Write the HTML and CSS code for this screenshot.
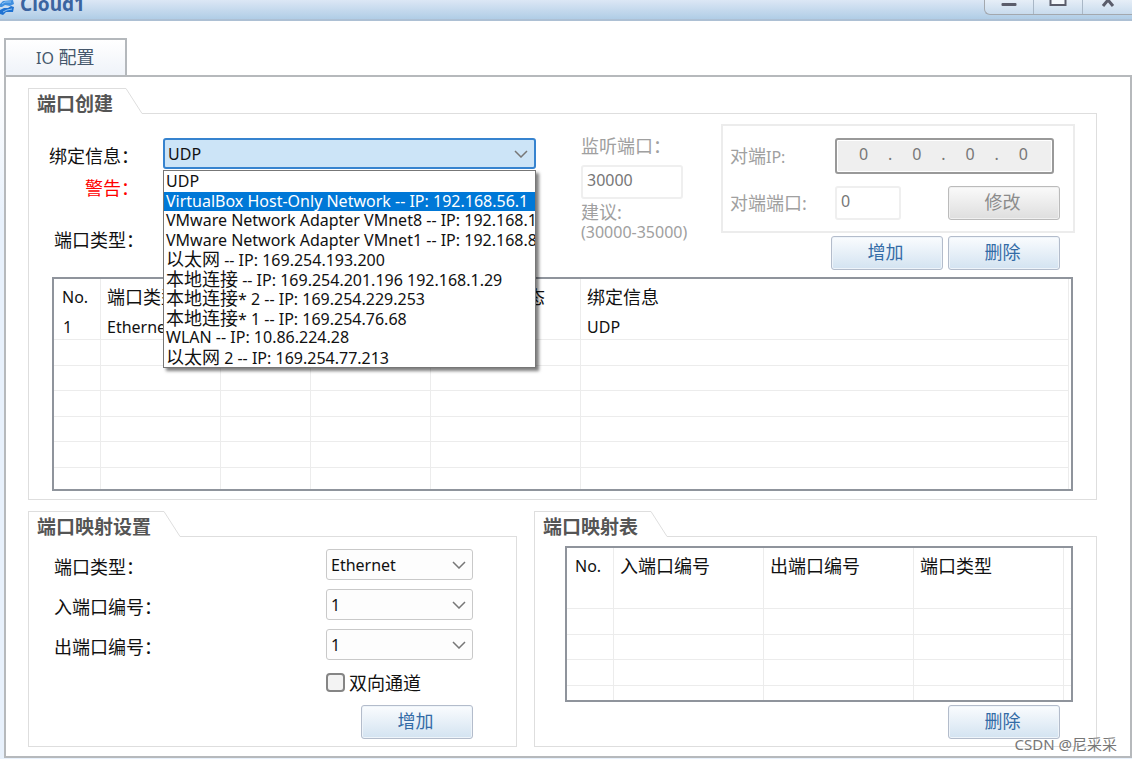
FILE: index.html
```html
<!DOCTYPE html>
<html lang="zh-CN">
<head>
    <meta charset="UTF-8">
    <meta name="viewport" content="width=device-width, initial-scale=1.0">
    <title>Cloud1</title>
    <link rel="stylesheet" href="styles.css">
</head>
<body>
    <header class="titlebar">
        <svg class="logo" width="15" height="16" viewBox="0 0 15 16">
            <path d="M0 4 L3 1 L13 0 L14 4 L10 6 L5 5 L2 7 L0 7 Z" fill="#3f8fe0"/>
            <path d="M0 10 L4 8 L8 8 L11 6 L14 7 L13 12 L6 12 L3 15 L0 14 Z" fill="#1f72d2"/>
            <path d="M2 4 L5 2 L11 2 M3 12 L7 10 L12 9" stroke="#8cc4f5" fill="none"/>
        </svg>
        <h1 class="window-title">Cloud1</h1>
        <div class="window-buttons">
            <button aria-label="最小化"><svg width="16" height="10" viewBox="0 0 16 10"><rect x="0.5" y="3" width="15" height="3" rx="1" fill="#5b5d6b"/></svg></button>
            <button aria-label="最大化"><svg width="18" height="10" viewBox="0 0 18 10"><path d="M1.5 0 V5 H16.5 V0" fill="#f4f8fc" stroke="#5b5d6b" stroke-width="2"/></svg></button>
            <button aria-label="关闭"><svg width="14" height="10" viewBox="0 0 14 10"><path d="M2 6 L7 0 L12 6" fill="none" stroke="#5b5d6b" stroke-width="3"/></svg></button>
        </div>
    </header>

    <main>
        <nav class="tabs">
            <button class="tab"><span class="latin">IO</span> 配置</button>
        </nav>

        <div class="panel">
            <!-- Create port -->
            <section class="group">
                <div class="group-head">
                    <h2>端口创建</h2>
                    <svg width="17" height="26" viewBox="0 0 17 26"><path d="M0 0.5 L16 25.5 H17" fill="none" stroke="#dedede"/></svg>
                    <span class="rule"></span>
                </div>
                <div class="group-body create">
                    <div class="create-form">
                        <div class="create-labels">
                            <label for="binding">绑定信息：</label>
                            <span class="warning">警告：</span>
                            <span class="type-label">端口类型：</span>
                        </div>

                        <div class="binding">
                            <select id="binding" class="select active">
                                <option>UDP</option>
                            </select>
                            <ul class="menu" role="listbox" aria-label="绑定信息">
                                <li role="option">UDP</li>
                                <li role="option" class="selected" aria-selected="true">VirtualBox Host-Only Network -- IP: 192.168.56.1</li>
                                <li role="option">VMware Network Adapter VMnet8 -- IP: 192.168.19</li>
                                <li role="option">VMware Network Adapter VMnet1 -- IP: 192.168.85</li>
                                <li role="option"><span class="zh">以太网</span> -- IP: 169.254.193.200</li>
                                <li role="option"><span class="zh">本地连接</span> -- IP: 169.254.201.196 192.168.1.29</li>
                                <li role="option"><span class="zh">本地连接</span>* 2 -- IP: 169.254.229.253</li>
                                <li role="option"><span class="zh">本地连接</span>* 1 -- IP: 169.254.76.68</li>
                                <li role="option">WLAN -- IP: 10.86.224.28</li>
                                <li role="option"><span class="zh">以太网</span> 2 -- IP: 169.254.77.213</li>
                            </ul>
                        </div>

                        <div class="listen">
                            <label for="listenPort">监听端口：</label>
                            <input id="listenPort" class="field" type="text" value="30000" disabled>
                            <span>建议:</span>
                            <span class="latin">(30000-35000)</span>
                        </div>

                        <div class="peer">
                            <div class="peer-box">
                                <div class="peer-row">
                                    <label for="ip1">对端<span class="latin">IP:</span></label>
                                    <div class="ip-field">
                                        <input id="ip1" type="text" value="0" disabled>
                                        <span>.</span>
                                        <input type="text" value="0" aria-label="对端IP 2" disabled>
                                        <span>.</span>
                                        <input type="text" value="0" aria-label="对端IP 3" disabled>
                                        <span>.</span>
                                        <input type="text" value="0" aria-label="对端IP 4" disabled>
                                    </div>
                                </div>
                                <div class="peer-row">
                                    <label for="peerPort">对端端口:</label>
                                    <input id="peerPort" class="field short" type="text" value="0" disabled>
                                    <button class="btn" disabled>修改</button>
                                </div>
                            </div>
                            <div class="actions">
                                <button class="btn">增加</button>
                                <button class="btn">删除</button>
                            </div>
                        </div>
                    </div>

                    <div class="table-box ports">
                        <table>
                            <colgroup>
                                <col class="w-no"><col class="w-120"><col class="w-90"><col class="w-120"><col class="w-150"><col>
                            </colgroup>
                            <thead>
                                <tr><th class="latin">No.</th><th>端口类型</th><th></th><th></th><th>端口开放状态</th><th>绑定信息</th></tr>
                            </thead>
                            <tbody>
                                <tr><td class="num">1</td><td>Ethernet</td><td></td><td></td><td></td><td>UDP</td></tr>
                                <tr><td></td><td></td><td></td><td></td><td></td><td></td></tr>
                                <tr><td></td><td></td><td></td><td></td><td></td><td></td></tr>
                                <tr><td></td><td></td><td></td><td></td><td></td><td></td></tr>
                                <tr><td></td><td></td><td></td><td></td><td></td><td></td></tr>
                                <tr><td></td><td></td><td></td><td></td><td></td><td></td></tr>
                                <tr><td></td><td></td><td></td><td></td><td></td><td></td></tr>
                            </tbody>
                        </table>
                    </div>
                </div>
            </section>

            <div class="bottom">
                <!-- Port mapping settings -->
                <section class="group">
                    <div class="group-head">
                        <h2>端口映射设置</h2>
                        <svg width="17" height="26" viewBox="0 0 17 26"><path d="M0 0.5 L16 25.5 H17" fill="none" stroke="#dedede"/></svg>
                        <span class="rule"></span>
                    </div>
                    <div class="group-body mapping">
                        <label for="portType">端口类型：</label>
                        <select id="portType" class="select"><option>Ethernet</option></select>
                        <label for="inPort">入端口编号：</label>
                        <select id="inPort" class="select"><option>1</option></select>
                        <label for="outPort">出端口编号：</label>
                        <select id="outPort" class="select"><option>1</option></select>
                        <label class="check"><input type="checkbox">双向通道</label>
                        <button class="btn">增加</button>
                    </div>
                </section>

                <!-- Port mapping table -->
                <section class="group">
                    <div class="group-head">
                        <h2>端口映射表</h2>
                        <svg width="17" height="26" viewBox="0 0 17 26"><path d="M0 0.5 L16 25.5 H17" fill="none" stroke="#dedede"/></svg>
                        <span class="rule"></span>
                    </div>
                    <div class="group-body map-table">
                        <div class="table-box maps">
                            <table>
                                <colgroup>
                                    <col class="w-no"><col class="w-150"><col class="w-150"><col class="w-150"><col>
                                </colgroup>
                                <thead>
                                    <tr><th class="latin">No.</th><th>入端口编号</th><th>出端口编号</th><th>端口类型</th><th></th></tr>
                                </thead>
                                <tbody>
                                    <tr><td></td><td></td><td></td><td></td><td></td></tr>
                                    <tr><td></td><td></td><td></td><td></td><td></td></tr>
                                    <tr><td></td><td></td><td></td><td></td><td></td></tr>
                                    <tr><td></td><td></td><td></td><td></td><td></td></tr>
                                    <tr><td></td><td></td><td></td><td></td><td></td></tr>
                                </tbody>
                            </table>
                        </div>
                        <button class="btn">删除</button>
                    </div>
                </section>
            </div>
        </div>
    </main>
    <div class="watermark">CSDN @尼采采</div>
</body>
</html>
```
FILE: styles.css
```css
* {
    box-sizing: border-box;
}
body {
    margin: 0;
    min-height: 100vh;
    position: relative;
    display: flex;
    flex-direction: column;
    font-family: "Noto Sans", "Noto Sans CJK SC", sans-serif;
    font-size: 18px;
    line-height: 24px;
    color: #111;
    background: #fff;
}
h1, h2, ul {
    margin: 0;
    padding: 0;
}
button, input, select {
    font-family: inherit;
    margin: 0;
}
.latin {
    font-size: 16px;
}
.zh {
    font-size: 18px;
}

/* Title bar */
.titlebar {
    display: flex;
    align-items: flex-start;
    height: 21px;
    overflow: hidden;
    background: linear-gradient(#dce7f5, #b0cde6);
    border-bottom: 2px solid #adc0d4;
}
.window-title {
    margin-left: 5px;
    margin-top: -8px;
    flex: 1;
    font-size: 19px;
    color: #3b64a0;
}
.window-buttons {
    display: flex;
    height: 15px;
    border: 1px solid #a3a8ae;
    border-top: none;
    border-right: none;
    border-bottom-left-radius: 6px;
    background: linear-gradient(#e6eef7, #c8dbed);
}
.window-buttons button {
    width: 49px;
    padding: 0;
    border: none;
    border-right: 1px solid #a9b7c6;
    background: none;
    display: flex;
    justify-content: center;
    align-items: flex-start;
}
.window-buttons button:last-child {
    border-right: none;
}

/* Tabs and main panel */
main {
    flex: 1;
    padding: 17px 0 2px 4px;
    background: linear-gradient(#fff 55px, #e8f1fc 200px);
}
.tabs {
    display: flex;
}
.tab {
    width: 123px;
    height: 37px;
    padding: 0 0 3px 30px;
    border: 2px solid #b4b8bc;
    border-bottom: none;
    background: linear-gradient(#fff, #eff3f9);
    font-size: 18px;
    color: #46586c;
    text-align: left;
}
.panel {
    border: 2px solid #b6b9bc;
    background: #fff;
    padding: 11px 33px 9px 22px;
    display: flex;
    flex-direction: column;
    gap: 11px;
}

/* Group boxes */
.group {
    display: flex;
    flex-direction: column;
}
.group-head {
    display: flex;
    height: 26px;
}
.group-head h2 {
    border-top: 1px solid #dedede;
    border-left: 1px solid #dedede;
    padding: 3px 13px 0 8px;
    font-size: 19px;
    color: #555;
}
.rule {
    flex: 1;
    border-bottom: 1px solid #dedede;
}
.group-body {
    flex: 1;
    border: 1px solid #dedede;
    border-top: none;
}

/* Controls */
.btn {
    width: 112px;
    height: 34px;
    padding: 0 3px 4px 0;
    border: 1px solid #b3bccb;
    border-radius: 3px;
    background: linear-gradient(#fafcfe, #d3e3f1);
    box-shadow: inset 0 0 0 1px #eef4fa;
    font-size: 18px;
    color: #336ba6;
}
.btn:disabled {
    border-color: #bbb;
    background: linear-gradient(#fafafa, #dedede);
    box-shadow: inset 0 0 0 1px #f0f0f0;
    color: #8b8b8b;
}
.field {
    width: 102px;
    height: 34px;
    padding: 0 4px 4px;
    border: 2px solid #efefef;
    border-radius: 3px;
    background: #fff;
    font-size: 16px;
    color: #777;
}
.field.short {
    width: 66px;
}
.select {
    width: 147px;
    height: 31px;
    padding: 0 4px;
    border: 1px solid #c9c9c9;
    border-radius: 3px;
    appearance: none;
    background: #fdfdfd url("data:image/svg+xml,%3Csvg xmlns='http://www.w3.org/2000/svg' width='14' height='8'%3E%3Cpath d='M1 1 L7 7 L13 1' fill='none' stroke='%23777' stroke-width='1.5'/%3E%3C/svg%3E") no-repeat right 6px center;
    font-size: 16px;
    color: #111;
}
.select.active {
    width: 100%;
    border: 2px solid #3683cf;
    padding: 0 3px;
    background-color: #cce4f7;
}

/* Create port form */
.create {
    padding: 10px 21px 8px;
}
.create-form {
    display: grid;
    grid-template-columns: 113px minmax(200px, 1fr) 185px 354px;
}
.create-labels {
    display: flex;
    flex-direction: column;
    align-items: flex-end;
    padding: 16px 24px 0 0;
    line-height: 32px;
    white-space: nowrap;
}
.warning {
    color: #f00;
}
.type-label {
    margin-top: 20px;
    margin-right: -5px;
}
.binding {
    position: relative;
    padding-top: 14px;
}
.menu {
    position: absolute;
    top: 46px;
    left: 0;
    right: 0;
    padding: 1px 0 0;
    list-style: none;
    overflow: hidden;
    border: 1px solid #777;
    background: #fff;
    box-shadow: 3px 3px 3px rgba(0, 0, 0, 0.5);
    font-size: 16px;
}
.menu li {
    height: 20px;
    padding-left: 2px;
    line-height: 19px;
    white-space: nowrap;
}
.menu li:nth-child(even) {
    height: 19px;
}
.menu .selected {
    background: #0078d7;
    color: #fff;
}
.listen {
    display: flex;
    flex-direction: column;
    align-items: flex-start;
    padding: 10px 0 0 45px;
    color: #a0a0a0;
}
.listen .field {
    margin: 7px 0 3px;
}
.listen span {
    line-height: 20px;
}
.peer-box {
    display: flex;
    flex-direction: column;
    gap: 12px;
    border: 2px solid #ececec;
    padding: 12px 13px 11px 7px;
}
.peer-row {
    display: flex;
    align-items: center;
    color: #a0a0a0;
}
.peer-row label {
    width: 105px;
}
.peer-row .btn {
    margin-left: auto;
}
.ip-field {
    display: flex;
    align-items: center;
    width: 219px;
    height: 36px;
    padding: 0 5px 4px 3px;
    border: 2px solid #999;
    border-radius: 3px;
    background: #efefef;
    box-shadow: inset 0 0 0 1px #fff;
    font-size: 16px;
    color: #777;
}
.ip-field input {
    flex: 1;
    min-width: 0;
    padding: 0;
    border: none;
    background: none;
    font-size: 16px;
    color: #777;
    text-align: center;
}
.ip-field span {
    width: 6px;
    text-align: center;
}
.actions {
    display: flex;
    justify-content: flex-end;
    gap: 5px;
    padding: 3px 15px 7px 0;
}

/* Tables */
.table-box {
    border: 2px solid #8f949c;
    background: #fff;
    overflow: hidden;
}
.ports {
    margin: 0 2px;
    padding-right: 2px;
    height: 214px;
}
.maps {
    height: 156px;
}
table {
    width: 100%;
    table-layout: fixed;
    border-collapse: separate;
    border-spacing: 0;
}
.w-no {
    width: 47px;
}
.w-90 {
    width: 90px;
}
.w-120 {
    width: 120px;
}
.w-150 {
    width: 150px;
}
th, td {
    padding: 0 0 0 6px;
    border-right: 1px solid #ececec;
    text-align: left;
    font-weight: normal;
    white-space: nowrap;
    overflow: hidden;
}
th {
    height: 36px;
}
th.latin {
    padding-left: 8px;
}
td {
    height: 25px;
    line-height: 20px;
    border-bottom: 1px solid #ececec;
    font-size: 16px;
}
td.num {
    padding-left: 9px;
}
tr:nth-child(even) td {
    height: 26px;
}
.maps th:last-child, .maps td:last-child {
    border-right: none;
}

/* Bottom groups */
.bottom {
    display: grid;
    grid-template-columns: 489px 1fr;
    gap: 17px;
}
.mapping {
    display: grid;
    grid-template-columns: 272px 147px;
    grid-template-rows: 31px 31px 31px 27px 34px;
    row-gap: 9px;
    align-items: center;
    padding: 12px 0 7px 25px;
}
.mapping label {
    padding-top: 5px;
}
.mapping .check {
    grid-column: 2;
    display: flex;
    align-items: center;
    gap: 4px;
    padding-top: 0;
}
.check input {
    appearance: none;
    width: 19px;
    height: 19px;
    border: 2px solid #858585;
    border-radius: 4px;
    background: #f3f3f3;
}
.mapping .btn {
    grid-column: 2;
    justify-self: end;
}
.map-table {
    display: flex;
    flex-direction: column;
    gap: 3px;
    padding: 9px 23px 7px 30px;
}
.map-table .btn {
    align-self: flex-end;
    margin-right: 13px;
}

.watermark {
    position: absolute;
    right: 15px;
    bottom: 4px;
    font-size: 15px;
    color: #777;
}
```
